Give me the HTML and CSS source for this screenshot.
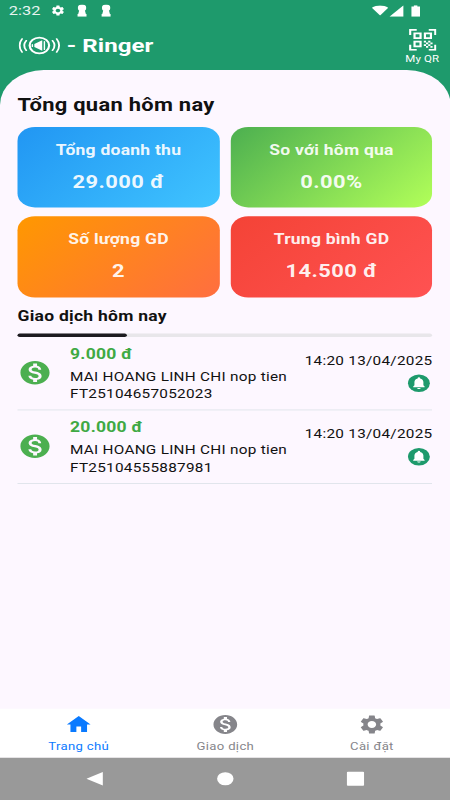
FILE: index.html
```html
<!DOCTYPE html>
<html lang="vi">
<head>
<meta charset="utf-8">
<title>Ringer</title>
<link rel="stylesheet" href="styles.css">
</head>
<body>
<svg class="defs" width="0" height="0" aria-hidden="true">
  <symbol id="gear" viewBox="0 0 24 24"><path d="M19.14 12.94c.04-.3.06-.61.06-.94 0-.32-.02-.64-.07-.94l2.03-1.58a.49.49 0 0 0 .12-.61l-1.92-3.32a.488.488 0 0 0-.59-.22l-2.39.96c-.5-.38-1.03-.7-1.62-.94l-.36-2.54a.484.484 0 0 0-.48-.41h-3.84c-.24 0-.43.17-.47.41l-.36 2.54c-.59.24-1.13.57-1.62.94l-2.39-.96c-.22-.08-.47 0-.59.22L2.74 8.87c-.12.21-.08.47.12.61l2.03 1.58c-.05.3-.09.63-.09.94s.02.64.07.94l-2.03 1.58a.49.49 0 0 0-.12.61l1.92 3.32c.12.22.37.29.59.22l2.39-.96c.5.38 1.03.7 1.62.94l.36 2.54c.05.24.24.41.48.41h3.84c.24 0 .44-.17.47-.41l.36-2.54c.59-.24 1.13-.56 1.62-.94l2.39.96c.22.08.47 0 .59-.22l1.92-3.32c.12-.22.07-.47-.12-.61l-2.01-1.58zM12 15.6c-1.98 0-3.6-1.62-3.6-3.6s1.62-3.6 3.6-3.6 3.6 1.62 3.6 3.6-1.62 3.6-3.6 3.6z"/></symbol>
  <symbol id="money" viewBox="0 0 24 24"><path d="M12 2C6.48 2 2 6.48 2 12s4.48 10 10 10 10-4.48 10-10S17.52 2 12 2zm1.41 16.09V20h-2.67v-1.93c-1.71-.36-3.16-1.46-3.27-3.4h1.96c.1 1.05.82 1.87 2.65 1.87 1.96 0 2.4-.98 2.4-1.59 0-.83-.44-1.61-2.67-2.14-2.48-.6-4.18-1.62-4.18-3.67 0-1.72 1.39-2.84 3.11-3.21V4h2.67v1.95c1.86.45 2.79 1.86 2.85 3.39H14.3c-.05-1.11-.64-1.87-2.22-1.87-1.5 0-2.4.68-2.4 1.64 0 .84.65 1.39 2.67 1.91s4.18 1.39 4.18 3.91c-.01 1.83-1.38 2.83-3.12 3.16z"/></symbol>
  <symbol id="bell" viewBox="0 0 24 24"><circle cx="12" cy="12" r="10"/><path fill="#fff" d="M12 18.7c-.9 0-1.6-.6-1.6-1.2h3.2c0 .6-.7 1.2-1.6 1.2zm5.2-2H6.8v-1.1l1.1-1.2v-3.7c0-2.1 1.1-3.700 3-4.200v-.4a1.100 1.100 0 0 1 2.200 0v.4c1.900.5 3 2.100 3 4.200v3.700l1.100 1.200z"/></symbol>
  <symbol id="keyhole" viewBox="0 0 12 14"><circle cx="6" cy="4" r="3.800"/><path d="M3.800 5h4.400l1.300 6h.6v3H1.900v-3h.6z"/></symbol>
</svg>
<div class="screen">
  <div class="status">
    <span class="time">2:32</span>
    <svg class="st-gear"><use href="#gear"/></svg>
    <svg class="st-key"><use href="#keyhole"/></svg>
    <svg class="st-key"><use href="#keyhole"/></svg>
    <span class="spacer"></span>
    <svg class="st-wifi" viewBox="0 0 16 12"><path d="M8 12 0 2.600C4.500-.9 11.500-.9 16 2.600z"/></svg>
    <svg class="st-signal" viewBox="0 0 13 13"><path d="M13 0v13H0z"/></svg>
    <svg class="st-battery" viewBox="0 0 8 13"><path d="M2.400 0h3.200v1.500H8V13H0V1.500h2.400z"/></svg>
  </div>
  <header class="header">
    <svg class="logo" viewBox="0 0 38 22" fill="none" stroke="#fff" stroke-linecap="round">
      <circle cx="19" cy="11" r="8.900" stroke-width="2"/>
      <path d="M21.600 5v12l-7.200-4.200V9.200z" fill="#fff" stroke="none"/>
      <path d="M23.600 6.500v9M12.600 10v2" stroke-width="1.300"/>
      <path d="M7 5.500c-2.300 3.300-2.300 7.700 0 11M3.200 3.500c-3 4.500-3 10.500 0 15M31 5.500c2.300 3.300 2.300 7.700 0 11M34.800 3.500c3 4.500 3 10.500 0 15" stroke-width="1.700"/>
    </svg>
    <h1 class="brand">- Ringer</h1>
    <div class="qr">
      <svg class="qr-icon" viewBox="0 0 25 25" fill="none" stroke="#fff" stroke-width="2">
        <path d="M1 7V1h6M18 1h6v6M24 18v6h-6M7 24H1v-6"/>
        <path d="M5 5h5.500v5.500H5zM14.500 5H20v5.500h-5.500zM5 14.500h5.500V20H5z"/>
        <path fill="#fff" stroke="none" d="M13.500 13.500h2v2h-2zM17.500 13.500h2v2h-2zM15.500 15.500h2v2h-2zM19.500 15.500h2v2h-2zM13.500 17.500h2v2h-2zM17.500 17.500h2v2h-2zM15.500 19.500h2v2h-2zM19.500 19.500h2v2h-2z"/>
      </svg>
      <span>My QR</span>
    </div>
  </header>
  <main class="sheet">
    <h2 class="overview">Tổng quan hôm nay</h2>
    <section class="cards">
      <div class="card blue"><span class="label">Tổng doanh thu</span><span class="value">29.000 đ</span></div>
      <div class="card green"><span class="label">So với hôm qua</span><span class="value">0.00%</span></div>
      <div class="card orange"><span class="label">Số lượng GD</span><span class="value">2</span></div>
      <div class="card red"><span class="label">Trung bình GD</span><span class="value">14.500 đ</span></div>
    </section>
    <h3 class="today">Giao dịch hôm nay</h3>
    <div class="track"><div class="thumb"></div></div>
    <article class="row">
      <svg class="coin"><use href="#money"/></svg>
      <div class="detail"><strong>9.000 đ</strong><p>MAI HOANG LINH CHI nop tien<br>FT25104657052023</p></div>
      <div class="meta"><time>14:20 13/04/2025</time><svg class="bell"><use href="#bell"/></svg></div>
    </article>
    <article class="row">
      <svg class="coin"><use href="#money"/></svg>
      <div class="detail"><strong>20.000 đ</strong><p>MAI HOANG LINH CHI nop tien<br>FT25104555887981</p></div>
      <div class="meta"><time>14:20 13/04/2025</time><svg class="bell"><use href="#bell"/></svg></div>
    </article>
  </main>
  <nav class="tabs">
    <div class="tab active"><svg viewBox="0 0 24 24"><path d="M10 20v-6h4v6h5v-8h3L12 3 2 12h3v8z"/></svg><span>Trang chủ</span></div>
    <div class="tab"><svg><use href="#money"/></svg><span>Giao dịch</span></div>
    <div class="tab"><svg><use href="#gear"/></svg><span>Cài đặt</span></div>
  </nav>
  <div class="system">
    <svg viewBox="0 0 16 18"><path d="M15 1.300v15.400L0 9z"/></svg>
    <svg viewBox="0 0 16 18"><circle cx="8" cy="9" r="7.500"/></svg>
    <svg viewBox="0 0 16 18"><rect y="1" width="16" height="16" rx="1.200"/></svg>
  </div>
</div>
</body>
</html>
```
FILE: styles.css
```css
* { box-sizing: border-box; margin: 0; padding: 0; }
html, body { width: 450px; height: 800px; overflow: hidden; }
body { font-family: Roboto, "Noto Sans", sans-serif; background: #fdf7ff; }
.defs { display: block; }
svg { flex: none; display: block; }

/* 411 x 914 dp device canvas, fitted to the 450 x 800 window */
.screen {
  width: 412px;
  height: 915px;
  margin-bottom: -115px;
  transform: scale(1.09375, 0.875);
  transform-origin: 0 0;
  display: flex;
  flex-direction: column;
  background: linear-gradient(#1e9a6c 0 125px, #fdf7ff 125px);
  color: #111;
}

.status { height: 24px; flex: none; display: flex; align-items: center; padding: 0 28px 0 8px; color: #fff; fill: #fff; }
.time { width: 38px; font-size: 15px; line-height: 24px; opacity: .9; }
.st-gear { width: 14px; height: 14px; margin-right: 9px; }
.st-key { width: 12px; height: 14px; margin-right: 10px; }
.spacer { flex: 1; }
.st-wifi { width: 15px; height: 12px; margin-right: 1px; }
.st-signal { width: 13px; height: 13px; margin-right: 7px; }
.st-battery { width: 8px; height: 13px; }

.header { height: 56px; flex: none; display: flex; align-items: center; padding: 0 10.500px 0 17px; color: #fff; }
.logo { width: 38px; height: 22px; margin-right: 6px; }
.brand { font-size: 22px; line-height: 26px; font-weight: 700; letter-spacing: .05px; }
.qr { margin: 3px 0 0 auto; display: flex; flex-direction: column; align-items: center; font-size: 10.5px; line-height: 14px; letter-spacing: .1px; }
.qr-icon { width: 25px; height: 25px; margin-bottom: 3px; }

.sheet { flex: 1; background: #fdf7ff; border-radius: 40px 40px 0 0; padding: 26px 16.600px 0 16px; }
.overview { font-size: 20px; line-height: 28px; font-weight: 700; letter-spacing: .27px; }
.cards { margin-top: 11px; display: grid; grid-template-columns: 1fr 1fr; grid-auto-rows: 92.3px; gap: 10px; }
.card { border-radius: 16px; color: rgba(255, 255, 255, .93); display: flex; flex-direction: column; align-items: center; padding-top: 17px; font-weight: 700; }
.blue { background: linear-gradient(135deg, #2196f3, #40c4ff); }
.green { background: linear-gradient(135deg, #4caf50, #b2ff59); }
.orange { background: linear-gradient(135deg, #ff9800, #ff6e40); }
.red { background: linear-gradient(135deg, #f44336, #ff5252); }
.label { font-size: 16px; line-height: 20px; letter-spacing: .22px; }
.value { margin-top: 12px; font-size: 20px; line-height: 28px; letter-spacing: .4px; }
.today { margin-top: 11px; font-size: 16px; line-height: 22px; font-weight: 700; letter-spacing: .24px; }
.track { margin-top: 8px; height: 4px; border-radius: 2px; background: #e8e6ea; }
.thumb { width: 100px; height: 4px; border-radius: 2px; background: #1d1b20; }

.row { height: 84px; display: flex; border-bottom: 1px solid #dde3ea; }
.coin { width: 32px; height: 32px; margin: 25.500px 16px 0 0; fill: #4caf50; }
.detail { padding-top: 10px; flex: 1; white-space: nowrap; }
.detail strong { display: block; font-size: 16px; line-height: 20px; color: #3fa944; letter-spacing: .25px; }
.detail p { margin-top: 5px; font-size: 14px; line-height: 20px; letter-spacing: .25px; }
.meta { padding-top: 17.500px; display: flex; flex-direction: column; align-items: flex-end; font-size: 14px; line-height: 20px; letter-spacing: .25px; }
.bell { width: 24px; height: 24px; margin-top: 4px; fill: #1e9a6c; }

.tabs { height: 56px; flex: none; background: #fff; display: flex; padding: 0 5px; }
.tab { flex: 1; display: flex; flex-direction: column; align-items: center; padding-top: 5px; color: #85858a; fill: #85858a; font-size: 12px; line-height: 16px; letter-spacing: .3px; }
.tab svg { width: 26px; height: 26px; margin-bottom: 4px; }
.active { color: #0a7aff; fill: #0a7aff; }

.system { height: 49px; flex: none; background: #999; display: flex; justify-content: center; align-items: center; gap: 103px; padding: 0 1px 1px 0; fill: #fff; }
.system svg { width: 16px; height: 18px; }
```
